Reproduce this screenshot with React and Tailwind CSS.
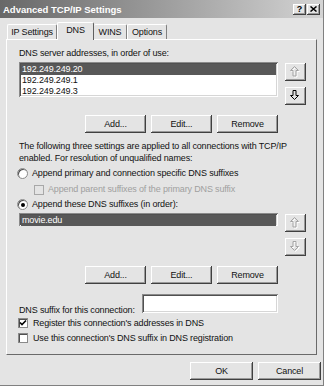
import React from 'react';

const raised = "bg-[#e4e4e4] shadow-[inset_-1px_-1px_0_#404040,inset_1px_1px_0_#ffffff,inset_-2px_-2px_0_#9a9a9a]";
const sunken = "bg-white shadow-[inset_1px_1px_0_#8a8a8a,inset_-1px_-1px_0_#ffffff,inset_2px_2px_0_#505050,inset_-2px_-2px_0_#d6d6d6]";

function Btn({ children, className = "" }) {
  return (
    <div className={`${raised} h-[18px] flex items-center justify-center ${className}`}>
      {children}
    </div>
  );
}

function Arrow({ dir, enabled }) {
  const up = "4.5,0.5 8.5,4.5 6,4.5 6,10 3,10 3,4.5 0.5,4.5";
  const down = "3,0.5 6,0.5 6,5.5 8.5,5.5 4.5,9.5 0.5,5.5 3,5.5";
  const pts = dir === "up" ? up : down;
  return (
    <svg width="11" height="12" viewBox="0 0 11 12">
      {!enabled && (
        <polygon points={pts} transform="translate(1,1)" fill="none" stroke="#ffffff" strokeWidth="1" />
      )}
      <polygon points={pts} fill={enabled ? "#e4e4e4" : "none"} stroke={enabled ? "#000000" : "#a4a4a4"} strokeWidth="1" />
    </svg>
  );
}

function Radio({ checked }) {
  return (
    <div className="w-[11px] h-[11px] rounded-full bg-white border border-[#8a8a8a] shadow-[inset_1px_1px_0_#505050] flex items-center justify-center shrink-0">
      {checked && <div className="w-[4px] h-[4px] rounded-full bg-black" />}
    </div>
  );
}

function Check({ checked, disabled }) {
  return (
    <div
      className={
        disabled
          ? "w-[10px] h-[10px] bg-[#e4e4e4] border border-[#a8a8a8] shrink-0"
          : "w-[10px] h-[10px] bg-white border border-[#8a8a8a] shadow-[inset_1px_1px_0_#505050] shrink-0 flex items-center justify-center"
      }
    >
      {checked && (
        <svg width="8" height="8" viewBox="0 0 8 8">
          <path d="M1 3.5 L3 5.5 L7 1.5" fill="none" stroke="#000" strokeWidth="1.6" />
        </svg>
      )}
    </div>
  );
}

function ListRow({ items, enabledDown }) {
  return (
    <div className="flex items-start">
      <div className={`${sunken} w-[259px] h-full flex flex-col pt-[2px] px-[2px]`}>
        {items.map((t, i) => (
          <div
            key={t}
            className={
              i === 0
                ? "h-[11px] bg-[#585858] text-white pl-[1px]"
                : "h-[11px] pl-[1px]"
            }
          >
            {t}
          </div>
        ))}
      </div>
      <div className="ml-[7px] mt-[1px] flex flex-col gap-[6px]">
        <Btn className="w-[21px]"><Arrow dir="up" enabled={false} /></Btn>
        <Btn className="w-[21px]"><Arrow dir="down" enabled={enabledDown} /></Btn>
      </div>
    </div>
  );
}

function ButtonRow() {
  return (
    <div className="w-[259px] flex justify-end gap-[5px]">
      <Btn className="w-[61px]">Add...</Btn>
      <Btn className="w-[61px]">Edit...</Btn>
      <Btn className="w-[61px]">Remove</Btn>
    </div>
  );
}

export default function App() {
  return (
    <div className="w-[324px] h-[386px] box-border bg-[#e4e4e4] border-r border-b border-[#808080] font-['Liberation_Sans',Arial,sans-serif] text-[9px] leading-[11px] tracking-[-0.15px] text-[#111111] flex flex-col overflow-hidden">
      {/* title bar */}
      <div className="h-[18px] shrink-0 flex items-center pl-[3px] pr-[3px] bg-linear-to-r from-[#686868] to-[#d4d4d4]">
        <span className="flex-1 font-bold text-white text-[9.5px] tracking-[0px]">Advanced TCP/IP Settings</span>
        <div className="flex gap-[1px]">
          <div className={`${raised} w-[13px] h-[11px] flex items-center justify-center font-bold text-[9px] leading-[9px] text-black`}>?</div>
          <div className={`${raised} w-[13px] h-[11px] flex items-center justify-center`}>
            <svg width="7" height="6" viewBox="0 0 7 6">
              <path d="M0.5 0.5 L6.5 5.5 M6.5 0.5 L0.5 5.5" stroke="#000" strokeWidth="1.5" />
            </svg>
          </div>
        </div>
      </div>

      {/* tabs */}
      <div className="mt-[4px] h-[17px] shrink-0 flex items-end pl-[7px]">
        <div className="w-[50px] h-[15px] border-t border-l border-r border-t-white border-l-white border-r-[#808080] rounded-t-[2px] flex items-center justify-center">IP Settings</div>
        <div className="relative z-10 w-[37px] h-[18px] mb-[-1px] bg-[#e4e4e4] border-t border-l border-r border-t-white border-l-white border-r-[#606060] rounded-t-[2px] flex items-start justify-center pt-[2px]">DNS</div>
        <div className="w-[33px] h-[15px] border-t border-r border-t-white border-r-[#808080] rounded-t-[2px] flex items-center justify-center">WINS</div>
        <div className="w-[40px] h-[15px] border-t border-l border-r border-t-white border-l-white border-r-[#808080] rounded-t-[2px] flex items-center justify-center">Options</div>
      </div>

      {/* panel */}
      <div className="ml-[6px] w-[311px] h-[316px] shrink-0 box-border border border-t-white border-l-white border-r-[#6a6a6a] border-b-[#6a6a6a] flex flex-col pl-[12px]">
        <div className="mt-[8px] h-[11px]">DNS server addresses, in order of use:</div>
        <div className="mt-[3px] h-[47px]">
          <ListRow items={["192.249.249.20", "192.249.249.1", "192.249.249.3"]} enabledDown={true} />
        </div>
        <div className="mt-[6px]"><ButtonRow /></div>
        <div className="mt-[7px] leading-[12px] whitespace-nowrap">
          The following three settings are applied to all connections with TCP/IP
          <br />
          enabled. For resolution of unqualified names:
        </div>
        <div className="mt-[3px] h-[13px] flex items-center gap-[4px] -ml-[2px]">
          <Radio checked={false} />
          <span>Append primary and connection specific DNS suffixes</span>
        </div>
        <div className="mt-[3px] h-[13px] flex items-center gap-[4px] ml-[15px]">
          <Check disabled />
          <span className="text-[#a0a0a0]">Append parent suffixes of the primary DNS suffix</span>
        </div>
        <div className="mt-[2px] h-[13px] flex items-center gap-[4px] -ml-[2px]">
          <Radio checked={true} />
          <span>Append these DNS suffixes (in order):</span>
        </div>
        <div className="mt-[2px] h-[48px]">
          <ListRow items={["movie.edu"]} enabledDown={false} />
        </div>
        <div className="mt-[5px]"><ButtonRow /></div>
        <div className="mt-[10px] h-[19px] flex items-start">
          <span className="mt-[11px] w-[123px]">DNS suffix for this connection:</span>
          <div className={`${sunken} w-[136px] h-[19px]`} />
        </div>
        <div className="mt-[3px] h-[14px] flex items-center gap-[5px] -ml-[1px]">
          <Check checked />
          <span>Register this connection's addresses in DNS</span>
        </div>
        <div className="mt-[1px] h-[14px] flex items-center gap-[5px] -ml-[1px]">
          <Check />
          <span>Use this connection's DNS suffix in DNS registration</span>
        </div>
      </div>

      {/* bottom buttons */}
      <div className="mt-[7px] flex justify-end gap-[5px] pr-[2px]">
        <Btn className="w-[63px]">OK</Btn>
        <Btn className="w-[63px]">Cancel</Btn>
      </div>
    </div>
  );
}
